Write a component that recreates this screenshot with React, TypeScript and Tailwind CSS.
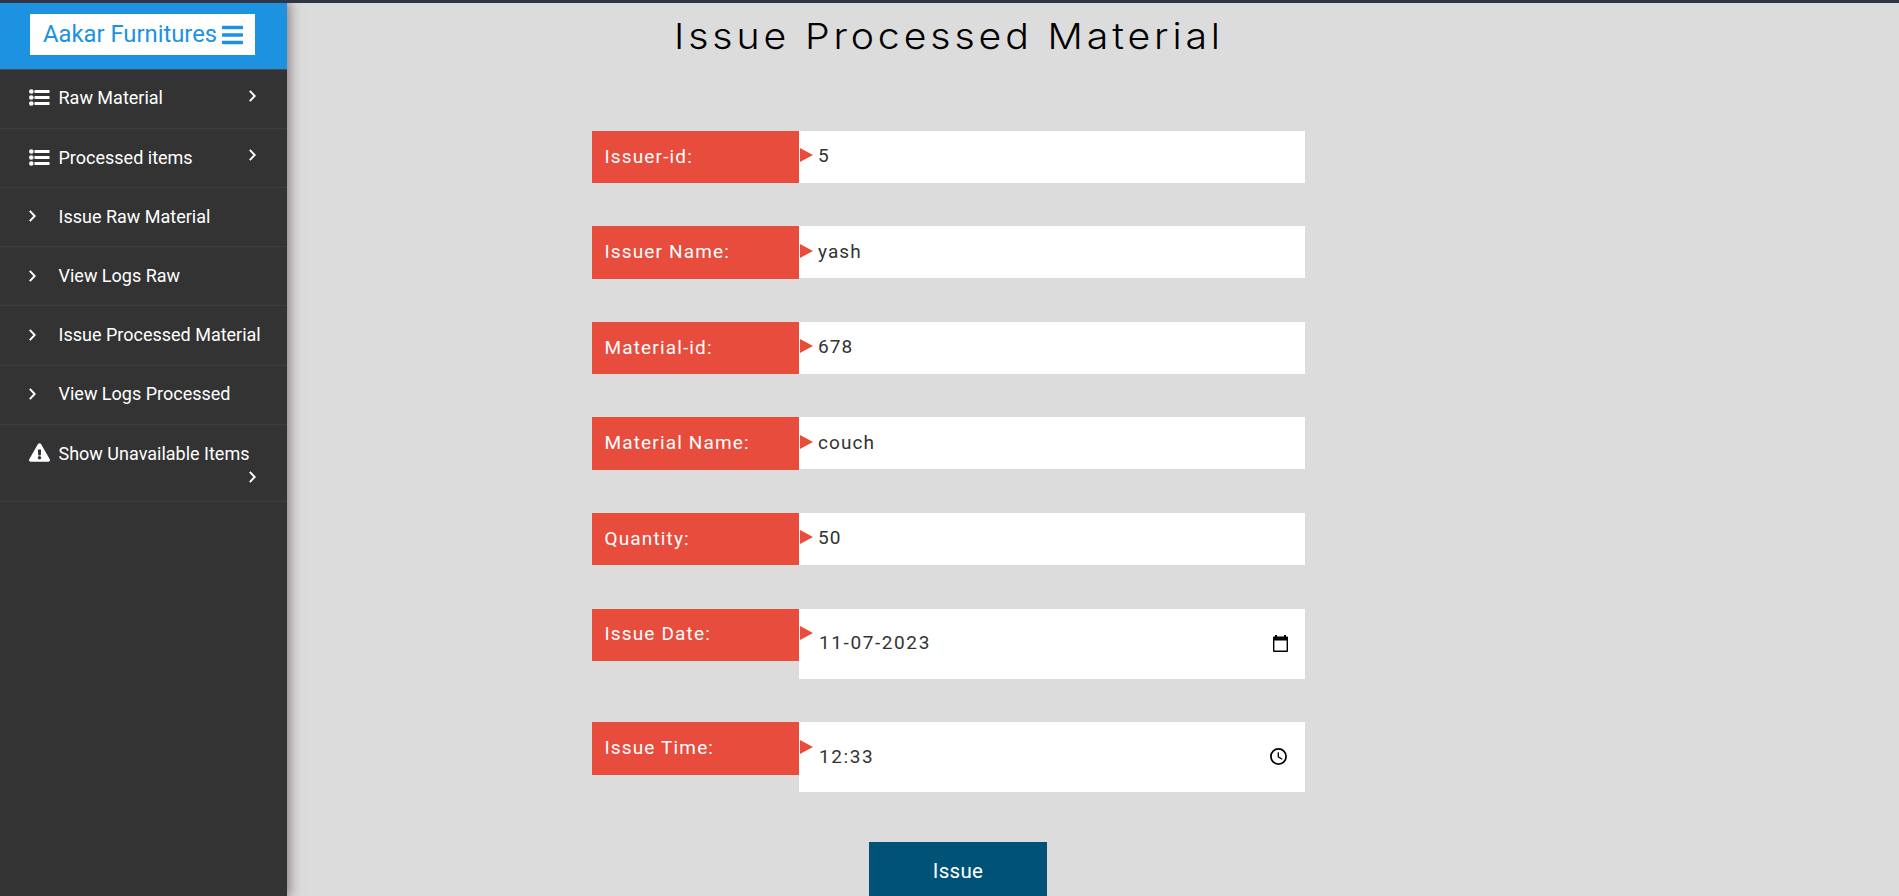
import { FaBars, FaExclamationTriangle } from "react-icons/fa";

type Item = { label: string; icon: "list" | "angle" | "warn"; more?: "inline" | "below" };

const items: Item[] = [
  { label: "Raw Material", icon: "list", more: "inline" },
  { label: "Processed items", icon: "list", more: "inline" },
  { label: "Issue Raw Material", icon: "angle" },
  { label: "View Logs Raw", icon: "angle" },
  { label: "Issue Processed Material", icon: "angle" },
  { label: "View Logs Processed", icon: "angle" },
  { label: "Show Unavailable Items", icon: "warn", more: "below" },
];

type Field = { label: string; value: string; kind: "text" | "date" | "time" };

const fields: Field[] = [
  { label: "Issuer-id:", value: "5", kind: "text" },
  { label: "Issuer Name:", value: "yash", kind: "text" },
  { label: "Material-id:", value: "678", kind: "text" },
  { label: "Material Name:", value: "couch", kind: "text" },
  { label: "Quantity:", value: "50", kind: "text" },
  { label: "Issue Date:", value: "11-07-2023", kind: "date" },
  { label: "Issue Time:", value: "12:33", kind: "time" },
];

function Angle() {
  return (
    <svg viewBox="0 0 7 12" className="h-[12px] w-[7px]" fill="none" stroke="currentColor" strokeWidth="2">
      <path d="M0.8 0.9 L5.7 6 L0.8 11.1" />
    </svg>
  );
}

function ListIcon() {
  return (
    <svg viewBox="0 0 21 17" className="h-[17px] w-[21px]" fill="currentColor">
      <circle cx="2.300" cy="2.500" r="2.300" />
      <circle cx="2.300" cy="8.500" r="2.300" />
      <circle cx="2.300" cy="14.500" r="2.300" />
      <path d="M5.500 1h15v3h-15zM5.500 7h15v3h-15zM5.500 13h15v3h-15z" />
    </svg>
  );
}

function MenuIcon({ icon }: { icon: Item["icon"] }) {
  if (icon === "list") return <ListIcon />;
  if (icon === "warn") return <FaExclamationTriangle className="mb-[1px] h-[21px] w-[21px]" />;
  return <Angle />;
}

function MenuItem({ item }: { item: Item }) {
  const below = item.more === "below";
  return (
    <li className={"shrink-0 border-b border-[#3d3d3d] pl-[29px] pr-[31.500px] pt-[16.800px] " + (below ? "h-[77px]" : "h-[59.2px]")}>
      <div className="flex h-[23px] items-center whitespace-nowrap">
        <span className="flex w-[29.5px] shrink-0 items-center">
          <MenuIcon icon={item.icon} />
        </span>
        <span>{item.label}</span>
        {item.more === "inline" && (
          <span className="ml-auto pb-[4px]">
            <Angle />
          </span>
        )}
      </div>
      {below && (
        <div className="flex justify-end pt-[6px]">
          <Angle />
        </div>
      )}
    </li>
  );
}

function CalendarIcon() {
  return (
    <svg viewBox="0 0 15 17" className="mr-[17px] h-[17px] w-[15px]" fill="#000">
      <path d="M2 0h2v1.5h7V0h2v1.5h1a1 1 0 0 1 1 1V16a1 1 0 0 1-1 1H1a1 1 0 0 1-1-1V2.500a1 1 0 0 1 1-1h1zM1.400 5.500v10h12.200v-10z" fillRule="evenodd" />
    </svg>
  );
}

function ClockIcon() {
  return (
    <svg viewBox="0 0 17 17" className="mr-[18px] h-[17px] w-[17px]" fill="none" stroke="#000">
      <circle cx="8.500" cy="8.500" r="7.600" strokeWidth="1.700" />
      <path d="M8.300 4.200v4.700l3.900 2.400" strokeWidth="1.300" />
    </svg>
  );
}

function FormRow({ field }: { field: Field }) {
  const tall = field.kind !== "text";
  return (
    <div className={"flex shrink-0 items-start " + (field.kind === "date" ? "h-[113.8px]" : "h-[95.58px]")}>
      <label className="flex h-[52.3px] w-[207px] items-center bg-[#e84c3d] pl-[12.500px] text-[19px] tracking-[1.15px] text-white">
        {field.label}
      </label>
      <div className={"flex w-[506px] bg-white text-[19px] text-[#333] " + (tall ? "h-[70px]" : "h-[52px]")}>
        <svg viewBox="0 0 13 14" className="ml-[1px] mt-[17.400px] h-[14px] w-[13px] shrink-0" fill="#e84c3d">
          <path d="M0 0L13 7L0 14z" />
        </svg>
        <div className={"flex flex-1 items-center " + (tall ? "h-[69px] pl-[6px] tracking-[1.6px]" : "h-[51px] pl-[5px] tracking-[1.05px]")}>
          <span>{field.value}</span>
          <span className="ml-auto">
            {field.kind === "date" && <CalendarIcon />}
            {field.kind === "time" && <ClockIcon />}
          </span>
        </div>
      </div>
    </div>
  );
}

export default function App() {
  return (
    <div className="flex h-[896px] w-[1899px] flex-col overflow-hidden bg-[#dcdcdc] font-['Roboto',sans-serif]">
      <div className="h-[3px] shrink-0 bg-[#2f3542]" />
      <div className="flex min-h-0 flex-1">
        <aside className="flex w-[287px] shrink-0 flex-col bg-[#333] text-[18px] text-white shadow-[0_0_12px_2px_rgba(70,45,45,0.6)] [clip-path:inset(0_-40px_0_0)]">
          <div className="flex h-[66.700px] shrink-0 items-start border-b border-[#4c4c4c] bg-[#1c92e1] pl-[30px] pt-[11px]">
            <div className="flex h-[41px] w-[225px] items-center bg-white pl-[13px] text-[23.800px] whitespace-nowrap text-[#1c92e1]">
              <span className="pt-[1px]">Aakar Furnitures</span>
              <FaBars className="ml-[5px] h-[24px] w-[21px]" />
            </div>
          </div>
          <ul className="flex flex-col">
            {items.map((item) => (
              <MenuItem key={item.label} item={item} />
            ))}
          </ul>
        </aside>
        <main className="flex flex-1 flex-col">
          <h1 className="ml-[386.500px] h-[127.700px] shrink-0 origin-left scale-x-[1.09] pt-[8px] font-['Inter',sans-serif] text-[36px] leading-[50px] font-light tracking-[3.550px] whitespace-nowrap text-black">
            Issue Processed Material
          </h1>
          <form className="ml-[305px]">
            {fields.map((field) => (
              <FormRow key={field.label} field={field} />
            ))}
            <button type="button" className="ml-[277px] mt-[24px] flex h-[58px] w-[178px] items-center justify-center bg-[#005377] text-[20.500px] tracking-[0.3px] text-white">
              Issue
            </button>
          </form>
        </main>
      </div>
    </div>
  );
}
